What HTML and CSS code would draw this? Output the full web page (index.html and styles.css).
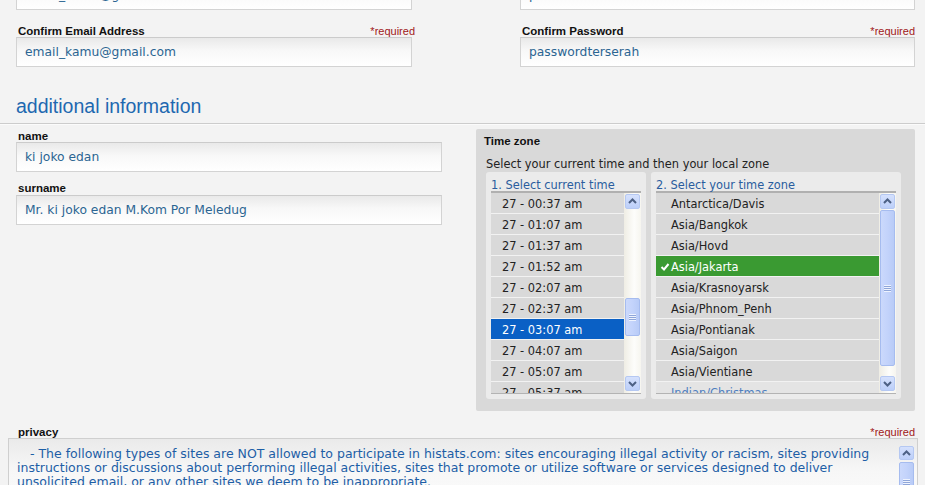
FILE: index.html
```html
<!DOCTYPE html>
<html>
<head>
<meta charset="utf-8">
<title>Register</title>
<link rel="stylesheet" href="styles.css">
</head>
<body>
<div class="page">
  <div class="pair">
    <div class="field">
      <div class="input">email_kamu@gmail.com</div>
    </div>
    <div class="field">
      <div class="input">passwordterserah</div>
    </div>
  </div>
  <div class="pair pair-confirm">
    <div class="field">
      <div class="label-row"><span class="label">Confirm Email Address</span><span class="req">*required</span></div>
      <div class="input">email_kamu@gmail.com</div>
    </div>
    <div class="field">
      <div class="label-row"><span class="label">Confirm Password</span><span class="req">*required</span></div>
      <div class="input">passwordterserah</div>
    </div>
  </div>

  <h2 class="section-title">additional information</h2>

  <div class="additional">
    <div class="names">
      <div class="label-row"><span class="label">name</span></div>
      <div class="input input-wide">ki joko edan</div>
      <div class="label-row label-gap"><span class="label">surname</span></div>
      <div class="input input-wide">Mr. ki joko edan M.Kom Por Meledug</div>
    </div>

    <div class="tz-panel">
      <div class="tz-title">Time zone</div>
      <div class="tz-help">Select your current time and then your local zone</div>
      <div class="tz-cols">
        <div class="tz-box tz-box-time">
          <div class="tz-box-title">1. Select current time</div>
          <div class="list">
            <div class="rows rows-time">
              <div class="row">27 - 00:37 am</div>
              <div class="row">27 - 01:07 am</div>
              <div class="row">27 - 01:37 am</div>
              <div class="row">27 - 01:52 am</div>
              <div class="row">27 - 02:07 am</div>
              <div class="row">27 - 02:37 am</div>
              <div class="row row-sel-blue">27 - 03:07 am</div>
              <div class="row">27 - 04:07 am</div>
              <div class="row">27 - 05:07 am</div>
              <div class="row">27 - 05:37 am</div>
            </div>
            <div class="sbar">
              <div class="sbtn"><svg width="13" height="13" viewBox="0 0 13 13"><polyline points="3,8 6.5,4.5 10,8" fill="none" stroke="#4d6185" stroke-width="2"/></svg></div>
              <div class="strack">
                <div class="sthumb thumb-time"><span class="grip"></span></div>
              </div>
              <div class="sbtn"><svg width="13" height="13" viewBox="0 0 13 13"><polyline points="3,5 6.5,8.5 10,5" fill="none" stroke="#4d6185" stroke-width="2"/></svg></div>
            </div>
          </div>
        </div>
        <div class="tz-box tz-box-zone">
          <div class="tz-box-title">2. Select your time zone</div>
          <div class="list">
            <div class="rows rows-zone">
              <div class="row">Antarctica/Davis</div>
              <div class="row">Asia/Bangkok</div>
              <div class="row">Asia/Hovd</div>
              <div class="row row-sel-green"><svg class="check" width="10" height="10" viewBox="0 0 10 10"><polyline points="1.5,5 4,7.5 8.5,2" fill="none" stroke="#fff" stroke-width="2"/></svg>Asia/Jakarta</div>
              <div class="row">Asia/Krasnoyarsk</div>
              <div class="row">Asia/Phnom_Penh</div>
              <div class="row">Asia/Pontianak</div>
              <div class="row">Asia/Saigon</div>
              <div class="row">Asia/Vientiane</div>
              <div class="row row-group">Indian/Christmas</div>
            </div>
            <div class="sbar">
              <div class="sbtn"><svg width="13" height="13" viewBox="0 0 13 13"><polyline points="3,8 6.5,4.5 10,8" fill="none" stroke="#4d6185" stroke-width="2"/></svg></div>
              <div class="strack">
                <div class="sthumb thumb-zone"><span class="grip"></span></div>
              </div>
              <div class="sbtn"><svg width="13" height="13" viewBox="0 0 13 13"><polyline points="3,5 6.5,8.5 10,5" fill="none" stroke="#4d6185" stroke-width="2"/></svg></div>
            </div>
          </div>
        </div>
      </div>
    </div>
  </div>

  <div class="privacy">
    <div class="label-row privacy-row"><span class="label">privacy</span><span class="req">*required</span></div>
    <div class="textarea">
      <div class="ta-text">
        <div class="ta-line ta-first">- The following types of sites are NOT allowed to participate in histats.com: sites encouraging illegal activity or racism, sites providing</div>
        <div class="ta-line">instructions or discussions about performing illegal activities, sites that promote or utilize software or services designed to deliver</div>
        <div class="ta-line">unsolicited email, or any other sites we deem to be inappropriate.</div>
      </div>
      <div class="ta-sbar">
        <div class="sbtn"><svg width="13" height="13" viewBox="0 0 13 13"><polyline points="3,8 6.5,4.5 10,8" fill="none" stroke="#4d6185" stroke-width="2"/></svg></div>
        <div class="sthumb thumb-ta"><span class="grip"></span></div>
      </div>
    </div>
  </div>
</div>
</body>
</html>
```
FILE: styles.css
```css
html, body {
  margin: 0;
  padding: 0;
  overflow: hidden;
  background: #f3f3f3;
}

.page {
  margin-top: -20px;
  width: 925px;
}

.pair {
  display: flex;
  gap: 108px;
  padding-left: 16px;
}

.pair-confirm {
  margin-top: 15px;
}

.field {
  width: 396px;
}

.pair .field + .field {
  width: 395px;
}

.label-row {
  display: flex;
  justify-content: space-between;
  align-items: baseline;
  height: 12px;
  line-height: 12px;
  padding-left: 2px;
}

.label {
  font: bold 11.5px "Liberation Sans", Arial, sans-serif;
  color: #111;
}

.req {
  font: 11px "Liberation Sans", Arial, sans-serif;
  color: #a01818;
  margin-right: -3px;
}

.pair .field + .field .req {
  margin-right: 0;
}

.input {
  box-sizing: border-box;
  height: 30px;
  border: 1px solid #d3d3d3;
  border-top-color: #cbcbcb;
  background: linear-gradient(#e9e9e9, #f8f8f8 45%, #ffffff);
  padding-left: 8px;
  font: 12.3px/28px "DejaVu Sans", Verdana, sans-serif;
  color: #2b6592;
  white-space: nowrap;
  overflow: hidden;
}

.section-title {
  margin: 27px 0 0 0;
  padding-left: 16px;
  height: 24px;
  font: normal 19.5px/24px "Liberation Sans", Arial, sans-serif;
  color: #1e68b0;
  border-bottom: 1px solid #cccccc;
  padding-bottom: 5px;
  box-shadow: 0 1px 0 #fbfbfb;
}

.additional {
  display: flex;
  align-items: flex-start;
  padding-top: 5px;
}

.names {
  width: 426px;
  margin-left: 16px;
  padding-top: 1px;
}

.input-wide {
  width: 426px;
}

.label-gap {
  margin-top: 10px;
  margin-bottom: 1px;
}

.tz-panel {
  margin-left: 34px;
  width: 439px;
  box-sizing: border-box;
  background: #d9d9d9;
  padding: 6px 14px 12px 8px;
  border-radius: 2px;
}

.tz-title {
  font: bold 11.5px/12px "Liberation Sans", Arial, sans-serif;
  color: #111;
}

.tz-help {
  margin-top: 10px;
  padding-left: 2px;
  font: 11.4px/14px "DejaVu Sans", Verdana, sans-serif;
  color: #222;
}

.tz-cols {
  display: flex;
  gap: 5px;
  margin-top: 1px;
  padding-left: 2px;
}

.tz-box {
  background: #ebebeb;
  border-radius: 3px;
  padding: 7px 5px 5px 5px;
}

.tz-box-time {
  width: 150px;
}

.tz-box-zone {
  width: 240px;
}

.tz-box-title {
  font: 11.4px/12px "DejaVu Sans", Verdana, sans-serif;
  color: #2a5d9e;
  height: 12px;
}

.list {
  display: flex;
  height: 200px;
  border-top: 2px solid #b0b0b0;
  border-bottom: 1px solid #b3b3b3;
  overflow: hidden;
}

.rows {
  flex: 1;
  overflow: hidden;
}

.row {
  height: 20px;
  box-sizing: border-box;
  height: 21px;
  padding-top: 2px;
  border-bottom: 1px solid #f2f2f2;
  background: #d9d9d9;
  font: 11.4px/18px "DejaVu Sans", Verdana, sans-serif;
  color: #222;
  white-space: nowrap;
  display: flex;
  align-items: center;
}

.rows-time .row {
  padding-left: 11px;
}

.rows-zone .row {
  padding-left: 15px;
}

.row-sel-blue {
  background: #0a60c5;
  color: #fff;
}

.rows-zone .row-sel-green {
  background: #3a9a32;
  color: #fff;
  padding-left: 4px;
}

.check {
  margin-right: 1px;
}

.row-group {
  background: #e4e4e4;
  color: #4f7fc0;
}

.sbar {
  width: 17px;
  display: flex;
  flex-direction: column;
  padding: 1px 0 2px 1px;
  box-sizing: border-box;
  background: linear-gradient(to right, #efede4, #fdfdfb 60%, #f6f5ef);
}

.sbtn {
  width: 15px;
  height: 15px;
  box-sizing: border-box;
  border: 1px solid #b5c8f2;
  border-radius: 2px;
  background: linear-gradient(#d5e1fd, #bccff9);
  display: flex;
  align-items: center;
  justify-content: center;
}

.sbtn svg {
  display: block;
}

.strack {
  flex: 1;
}

.sthumb {
  width: 15px;
  box-sizing: border-box;
  border: 1px solid #a6bcef;
  border-radius: 2px;
  background: linear-gradient(to right, #cbd9fc, #c3d3fb 50%, #b8cbf7);
  display: flex;
  align-items: center;
  justify-content: center;
}

.thumb-time {
  margin-top: 89px;
  height: 38px;
}

.thumb-zone {
  margin-top: 1px;
  height: 156px;
}

.grip {
  width: 7px;
  height: 7px;
  background: repeating-linear-gradient(#eef3fe 0 1px, #8fa6d9 1px 2px);
}

.privacy {
  margin-top: 15px;
  margin-left: 8px;
  width: 910px;
}

.privacy-row {
  padding-left: 10px;
  padding-right: 3px;
}

.privacy-row .req {
  margin-right: 0;
}

.textarea {
  display: flex;
  height: 80px;
  border: 1px solid #cfcfcf;
  background: linear-gradient(#eaeaea, #f7f7f7 40%, #fdfdfd);
}

.ta-text {
  flex: 1;
  padding: 8px 0 0 8px;
  font: 12.5px/14px "DejaVu Sans", Verdana, sans-serif;
  color: #1d5ea6;
  white-space: nowrap;
  overflow: hidden;
}

.ta-first {
  padding-left: 13px;
}

.ta-sbar {
  width: 17px;
  padding-top: 7px;
  display: flex;
  flex-direction: column;
  gap: 2px;
  margin-right: 1px;
}

.ta-sbar .sbtn {
  height: 14px;
}

.thumb-ta {
  height: 40px;
}
```
